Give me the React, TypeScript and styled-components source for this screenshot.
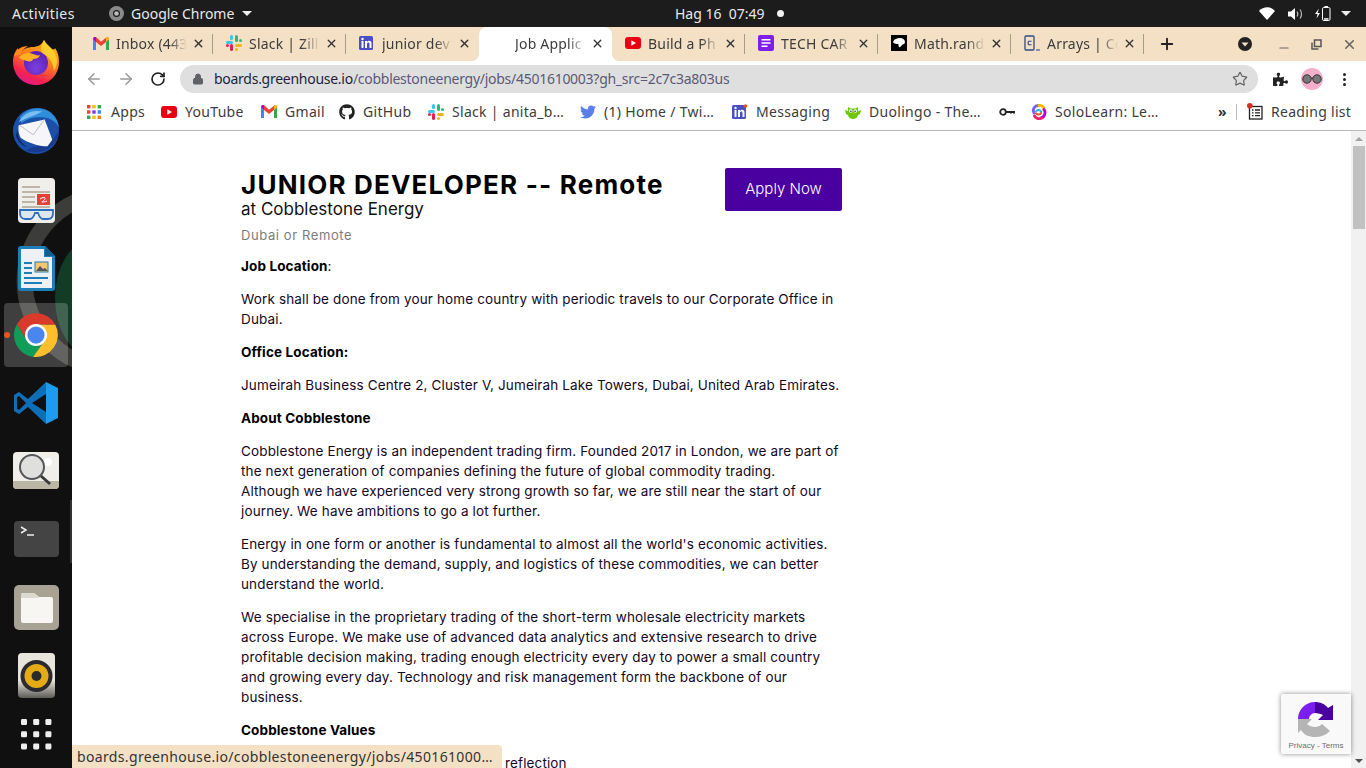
import React from 'react'
import styled, { createGlobalStyle } from 'styled-components'
import { FaGithub, FaPuzzlePiece, FaTwitter } from 'react-icons/fa'
import { ArrowLeft, ArrowRight, Lock, Minus, Plus, RotateCw, Star, X } from 'lucide-react'

const UI_FONT = '"Noto Sans", "Open Sans", sans-serif'
const PAGE_FONT = 'Inter, "Liberation Sans", sans-serif'

const GlobalStyle = createGlobalStyle`
  html, body { margin: 0; padding: 0; height: 100%; overflow: hidden; background: #101010; }
  #root { height: 100%; }
  * { box-sizing: border-box; }
`

/* ---------- logos and favicons ---------- */

function GmailIcon() {
  return (
    <svg width="16" height="13" viewBox="0 0 16 13">
      <path d="M0 2v11h3V5z" fill="#4285f4" />
      <path d="M16 2v11h-3V5z" fill="#34a853" />
      <path d="M0 2l3 3 5 4 5-4 3-3-1-2h-1L8 4.800 3 0H1z" fill="#ea4335" />
      <path d="M13 5l3-3-1-2h-1l-1 1z" fill="#fbbc04" />
      <path d="M3 5L0 2l1-2h1l1 1z" fill="#a100d8" />
    </svg>
  )
}

function SlackIcon() {
  return (
    <svg width="16" height="16" viewBox="0 0 16 16">
      <rect x="0" y="6" width="7" height="3" rx="1.500" fill="#36c5f0" />
      <rect x="4" y="0" width="3" height="5" rx="1.500" fill="#36c5f0" />
      <rect x="9" y="0" width="3" height="7" rx="1.500" fill="#2eb67d" />
      <rect x="13" y="4" width="3" height="3" rx="1.500" fill="#2eb67d" />
      <rect x="9" y="9" width="7" height="3" rx="1.500" fill="#ecb22e" />
      <rect x="9" y="13" width="3" height="3" rx="1.500" fill="#ecb22e" />
      <rect x="4" y="9" width="3" height="7" rx="1.500" fill="#e01e5a" />
      <rect x="0" y="9" width="3" height="3" rx="1.500" fill="#e01e5a" />
    </svg>
  )
}

function LinkedInIcon({ dot }: { dot?: boolean }) {
  return (
    <svg width="16" height="16" viewBox="0 0 16 16">
      <rect x="0" y="1" width="14" height="14" rx="1.500" fill="#4b4fc4" />
      <rect x="2.500" y="6" width="2" height="7" fill="#fff" />
      <circle cx="3.500" cy="4" r="1.200" fill="#fff" />
      <path d="M6 6h2v1c.5-.8 1.300-1.200 2.200-1.200 1.600 0 2.300 1 2.300 2.800V13h-2V9c0-1-.3-1.500-1.100-1.500S8 8 8 9v4H6z" fill="#fff" />
      {dot && <circle cx="13.500" cy="2" r="1.800" fill="#e8502a" />}
    </svg>
  )
}

function YouTubeIcon() {
  return (
    <svg width="16" height="12" viewBox="0 0 16 12">
      <rect width="16" height="12" rx="3" fill="#e60012" />
      <path d="M6.300 3.300v5.400L11 6z" fill="#fff" />
    </svg>
  )
}

function DocsIcon() {
  return (
    <svg width="16" height="16" viewBox="0 0 16 16">
      <rect width="16" height="16" rx="2" fill="#7c1fe8" />
      <path d="M3.500 4h9v1.400h-9zM3.500 7.300h9v1.400h-9zM3.500 10.600h6v1.400h-6z" fill="#fff" />
    </svg>
  )
}

function MathIcon() {
  return (
    <svg width="16" height="16" viewBox="0 0 16 16">
      <rect width="16" height="16" fill="#000" />
      <path d="M2 7c1-3 4-4 7-4s5 2 5 4-2 2-3 3-2 3-3 2 0-3-1-3-4 0-5-2z" fill="#fff" />
    </svg>
  )
}

function ArraysIcon() {
  return (
    <svg width="16" height="16" viewBox="0 0 16 16" fill="none">
      <rect x="1" y="1" width="9" height="14" rx="1" stroke="#2e4a86" strokeWidth="1.300" />
      <path d="M7.500 6.200H5a.8.8 0 0 0-.8.8v2a.8.8 0 0 0 .8.8h2.500" stroke="#2e4a86" strokeWidth="1.100" />
      <path d="M12 15h4" stroke="#4a6aa8" strokeWidth="1.300" />
    </svg>
  )
}

function AppsIcon() {
  const colors = ['#ea4335', '#fbbc04', '#34a853', '#ea4335', '#7c3aed', '#4285f4', '#34a853', '#fbbc04', '#ea8600']
  return (
    <svg width="16" height="14" viewBox="0 0 16 14">
      {colors.map((c, i) => (
        <rect key={i} x={(i % 3) * 5.300} y={Math.floor(i / 3) * 5.300} width="3.400" height="3.400" fill={c} />
      ))}
    </svg>
  )
}

function DuolingoIcon() {
  return (
    <svg width="16" height="16" viewBox="0 0 16 16">
      <path d="M0 6l3 1V3l2.500 1.500h5L13 3v4l3-1-1 4-2 1c-.5 2.500-2.500 4-5 4s-4.500-1.500-5-4l-2-1z" fill="#6cc70a" />
      <circle cx="5.700" cy="7" r="1.800" fill="#fff" />
      <circle cx="10.300" cy="7" r="1.800" fill="#fff" />
      <circle cx="5.900" cy="7.200" r=".8" fill="#224" />
      <circle cx="10.100" cy="7.200" r=".8" fill="#224" />
      <path d="M7 9h2l-1 1.500z" fill="#f5a300" />
    </svg>
  )
}

function KeyIcon() {
  return (
    <svg width="16" height="8" viewBox="0 0 16 8" fill="none">
      <circle cx="4" cy="4" r="2.800" stroke="#222" strokeWidth="1.800" />
      <path d="M7 3h9v2.500h-2V5h-1v.5h-2V5H7z" fill="#222" />
    </svg>
  )
}

function SoloLearnIcon() {
  return (
    <svg width="16" height="16" viewBox="0 0 16 16" fill="none" strokeWidth="2.800" strokeLinecap="round">
      <path d="M3 9C1 5 4 1 8 1.500" stroke="#7a5cf0" />
      <path d="M8 1.500c3.500-.5 5.500 2 5 4.500" stroke="#f5b800" />
      <path d="M13 5.500c2.500 3.500 0 8-3 8.500" stroke="#b400e6" />
      <path d="M10.500 14c-3 1.500-6 0-7-2" stroke="#f0226e" />
      <path d="M5 7.500c1.500-2 4-2 5 0" stroke="#2bb3e8" strokeWidth="2" />
      <path d="M10 9c-1 2-3.500 2-5 .5" stroke="#f0522a" strokeWidth="2" />
    </svg>
  )
}

function ReadingListIcon() {
  return (
    <svg width="16" height="17" viewBox="0 0 16 17" fill="none">
      <rect x="2.500" y="3.500" width="12.500" height="12.500" stroke="#222" strokeWidth="1.300" />
      <path d="M5 7h1.500M8 7h5M5 9.800h1.500M8 9.800h5M5 12.600h1.500M8 12.600h5" stroke="#222" strokeWidth="1.300" />
      <circle cx="2.800" cy="2.800" r="2.800" fill="#d93025" />
    </svg>
  )
}

function Firefox() {
  return (
    <svg width="46" height="46" viewBox="0 1 46 46">
      <defs>
        <linearGradient id="fxBody" x1="0.800" y1="0" x2="0.300" y2="1">
          <stop offset="0" stopColor="#ffc21a" />
          <stop offset="0.450" stopColor="#ff7a1f" />
          <stop offset="0.800" stopColor="#f5224f" />
          <stop offset="1" stopColor="#dd1a8c" />
        </linearGradient>
        <radialGradient id="fxGlobe" cx="0.500" cy="0.700" r="0.700">
          <stop offset="0" stopColor="#7b3fe0" />
          <stop offset="1" stopColor="#5a1fb0" />
        </radialGradient>
      </defs>
      <path d="M31 1c2 4 5 6 8 9 2 1 3 0 3-1 3 4 4 9 4 14 0 13-10 23-23 23S0 36 0 23C0 17 2 12 5 9c0 3 1 4 2 5 3-4 8-6 13-6 4 0 9-2 11-7z" fill="url(#fxBody)" />
      <circle cx="23" cy="24" r="12" fill="url(#fxGlobe)" />
      <path d="M6 18c4-4 10-5 14-3 3 1 5 2 7 1-1 3-4 4-7 4 0 3-5 3-9 1-2 0-4-1-5-3z" fill="#ffb11f" />
      <path d="M31 1c3 6 12 10 13 20 0 4-1 8-3 11-1-9-5-15-12-18-2-5 0-9 2-13z" fill="#ffd030" opacity=".9" />
      <path d="M1 17c2-6 7-10 14-10-5 3-7 6-8 9-2 0-4 0-6 1z" fill="#ff8a1f" />
    </svg>
  )
}

function Thunderbird() {
  return (
    <svg width="48" height="48" viewBox="0 1 50 50">
      <circle cx="25" cy="26" r="24" fill="#1b4fa8" />
      <path d="M8 12C14 3 26 0 36 4c7 3 12 10 13 18-4-6-9-9-15-10-9-1-17 0-24 6z" fill="#2f8ddb" />
      <path d="M14 46c9 4 20 3 27-4 5-5 8-11 8-17-4 8-10 14-18 16-6 1-12 2-17 5z" fill="#183b8c" />
      <path d="M7 20l27-6 8 21-5 7c-10 0-21-4-28-9-2-4-3-9-2-13z" fill="#f6f6f8" />
      <path d="M8 20l14 10 12-16" fill="none" stroke="#b8bcc8" strokeWidth="1" />
      <path d="M7 17C11 8 22 3 32 6c-4 1-6 3-10 4-6 2-11 4-15 7z" fill="#7cc0f0" />
      <path d="M7 21c-3 8 1 17 9 22-5-1-10-6-12-12z" fill="#0c2a6e" />
    </svg>
  )
}

function DocViewer() {
  return (
    <svg width="37" height="47" viewBox="0 -2 37 47">
      <rect width="37" height="45" rx="4" fill="#efeeea" />
      <path d="M4 8h18v2H4zM4 13h28v2H4zM4 18h13v2H4zM4 23h13v2H4zM4 28h28v2H4z" fill="#bdb6a6" />
      <rect x="19" y="16" width="13" height="11" fill="#e5403a" />
      <path d="M22 21c3-2 6-2 5 0s-4 3-3 3 3 0 5-1" fill="none" stroke="#fff" strokeWidth="1" />
      <path d="M2 32h33v3c0 4-2 6-5 6h-5c-3 0-4-3-5-6h-3c-1 3-2 6-5 6H7c-3 0-5-2-5-6z" fill="#dfe7ef" stroke="#2f6fc0" strokeWidth="1.800" />
    </svg>
  )
}

function WriterIcon() {
  return (
    <svg width="37" height="47" viewBox="0 -2 37 47">
      <path d="M3 0h24l10 10v32a3 3 0 0 1-3 3H3a3 3 0 0 1-3-3V3a3 3 0 0 1 3-3z" fill="#1d7fb8" />
      <path d="M3 3h23v8h8v31H3z" fill="#eef1f4" />
      <path d="M27 0l10 10H27z" fill="#145f8f" />
      <path d="M6 16h8v2H6zM6 21h8v2H6zM6 26h8v2H6zM6 31h24v2H6zM6 36h18v2H6z" fill="#1d7fb8" />
      <rect x="17" y="16" width="13" height="10" fill="#f3c76f" stroke="#1d7fb8" />
      <path d="M18 25l4-5 3 3 2-1 3 3z" fill="#555" />
    </svg>
  )
}

function ChromeLogo() {
  return (
    <svg width="46" height="46" viewBox="0 0 48 48">
      <path d="M24 24L14.500 29.500 4.100 12.500A23 23 0 0 0 21 46.800L33.500 29.500Z" fill="#0f9d58" />
      <path d="M24 24V13H44A23 23 0 0 1 21 46.800L33.500 29.500Z" fill="#fdc02c" />
      <path d="M24 24L14.500 29.500 4.100 12.500A23 23 0 0 1 44 13H24Z" fill="#d93a2b" />
      <circle cx="24" cy="24" r="11.500" fill="#fff" />
      <circle cx="24" cy="24" r="9" fill="#4a86f0" />
    </svg>
  )
}

function VSCode() {
  return (
    <svg width="44" height="42" viewBox="0 0 44 42">
      <path d="M32 0L14 17 5 10 0 13v16l5 3 9-7 18 17V30L18 21l14-9z" fill="#0e6fb8" />
      <path d="M5 14l7 7-7 7-2-1.500V15.500z" fill="#101010" />
      <path d="M32 0l12 6v30l-12 6z" fill="#1c9bef" />
    </svg>
  )
}

function Magnifier() {
  return (
    <svg width="46" height="38" viewBox="0 0 46 38">
      <rect width="46" height="37" rx="4" fill="#efeee8" />
      <path d="M0 29h46v4a4 4 0 0 1-4 4H4a4 4 0 0 1-4-4z" fill="#bcb6a4" />
      <circle cx="35" cy="10" r="4" fill="#fff" />
      <circle cx="19" cy="15" r="12" fill="#dfe0de" stroke="#55565a" strokeWidth="2" />
      <path d="M28 24l9 8" stroke="#3a3a3c" strokeWidth="3" />
    </svg>
  )
}

function Terminal() {
  return (
    <svg width="45" height="36" viewBox="0 0 45 36">
      <rect width="45" height="36" rx="4" fill="#444" />
      <path d="M7 6l5 3-5 3" fill="none" stroke="#eee" strokeWidth="1.500" />
      <path d="M13 14h7" stroke="#eee" strokeWidth="1.500" />
    </svg>
  )
}

function FilesIcon() {
  return (
    <svg width="45" height="45" viewBox="0 0 45 45">
      <rect width="45" height="45" rx="5" fill="#a8a294" />
      <path d="M7 10a2 2 0 0 1 2-2h11l5 4h12a2 2 0 0 1 2 2v22a2 2 0 0 1-2 2H9a2 2 0 0 1-2-2z" fill="#f7f6f3" />
      <path d="M7 13h18l-5-5H9a2 2 0 0 0-2 2z" fill="#dcd9d1" />
    </svg>
  )
}

function Rhythmbox() {
  return (
    <svg width="37" height="45" viewBox="0 0 37 45">
      <defs>
        <linearGradient id="rbBox" x1="0" y1="0" x2="0" y2="1">
          <stop offset="0.600" stopColor="#e8e5dc" />
          <stop offset="1" stopColor="#5d5d58" />
        </linearGradient>
      </defs>
      <rect width="37" height="45" rx="4" fill="url(#rbBox)" />
      <circle cx="18.500" cy="23" r="16" fill="#2b2b2e" />
      <circle cx="18.500" cy="23" r="12" fill="#e3ac17" />
      <circle cx="18.500" cy="23" r="5" fill="#2a2a2a" />
    </svg>
  )
}

function DockGrid() {
  return (
    <svg width="32" height="32" viewBox="0 0 32 32">
      {[0, 1, 2, 3, 4, 5, 6, 7, 8].map((i) => (
        <rect key={i} x={(i % 3) * 12.200 + 1} y={Math.floor(i / 3) * 12.200 + 1} width="6" height="6" rx="1.300" fill="#eee" />
      ))}
    </svg>
  )
}

function Wallpaper() {
  return (
    <WallpaperArt viewBox="0 0 72 741" width="72" height="741">
      <ellipse cx="92" cy="271" rx="37" ry="58" fill="#123c26" />
      <circle cx="111.600" cy="254" r="87" fill="none" stroke="#3c3c3a" strokeWidth="16" />
      <path d="M71 473v63" stroke="#333" strokeWidth="2" />
    </WallpaperArt>
  )
}

function RecaptchaLogo() {
  return (
    <svg width="38" height="38" viewBox="0 0 38 38">
      <path d="M1 19C1 10 8 2 18 2v11c-3 0-6 3-6 6z" fill="#7a1ff0" />
      <path d="M18 2c5 0 10 2 13 6l5-3v15H21l5-5c-2-1-5-2-8-2z" fill="#4a00a0" />
      <path d="M1 19h14l-5 5c2 2 5 3 8 3 3 0 5-1 7-3l8 7c-4 4-9 6-15 6-6 0-11-2-14-7l-3 3z" fill="#b5b5b5" />
    </svg>
  )
}

/* ---------- data ---------- */

const tabs = [
  { title: 'Inbox (443', icon: <GmailIcon /> },
  { title: 'Slack | Zilla', icon: <SlackIcon /> },
  { title: 'junior dev', icon: <LinkedInIcon /> },
  { title: 'Job Applic', active: true },
  { title: 'Build a Ph', icon: <YouTubeIcon /> },
  { title: 'TECH CAR', icon: <DocsIcon /> },
  { title: 'Math.rand', icon: <MathIcon /> },
  { title: 'Arrays | Co', icon: <ArraysIcon /> }
]

const bookmarks = [
  { label: 'Apps', icon: <AppsIcon />, width: 74 },
  { label: 'YouTube', icon: <YouTubeIcon />, width: 100 },
  { label: 'Gmail', icon: <GmailIcon />, width: 78 },
  { label: 'GitHub', icon: <FaGithub size={16} color="#222" />, width: 89 },
  { label: 'Slack | anita_b…', icon: <SlackIcon />, width: 152 },
  { label: '(1) Home / Twi…', icon: <FaTwitter size={16} color="#5b7fe8" />, width: 152 },
  { label: 'Messaging', icon: <LinkedInIcon dot />, width: 113 },
  { label: 'Duolingo - The…', icon: <DuolingoIcon />, width: 154 },
  { label: '', icon: <KeyIcon />, width: 32 },
  { label: 'SoloLearn: Le…', icon: <SoloLearnIcon />, width: 187 }
]

const dockItems = [
  { name: 'firefox', icon: <Firefox /> },
  { name: 'thunderbird', icon: <Thunderbird /> },
  { name: 'viewer', icon: <DocViewer /> },
  { name: 'writer', icon: <WriterIcon /> },
  { name: 'chrome', icon: <ChromeLogo />, active: true },
  { name: 'vscode', icon: <VSCode /> },
  { name: 'magnifier', icon: <Magnifier /> },
  { name: 'terminal', icon: <Terminal /> },
  { name: 'files', icon: <FilesIcon /> },
  { name: 'rhythmbox', icon: <Rhythmbox /> }
]

export default function App() {
  return (
    <Desktop>
      <GlobalStyle />
      <TopBar>
        <Activities>Activities</Activities>
        <AppMenu>
          <svg width="15" height="15" viewBox="0 0 15 15">
            <circle cx="7.500" cy="7.500" r="7.500" fill="#8a8a8a" />
            <circle cx="7.500" cy="7.500" r="3.500" fill="#1c1c1c" />
            <circle cx="7.500" cy="7.500" r="2.300" fill="#bdbdbd" />
          </svg>
          <AppName>Google Chrome</AppName>
          <Caret />
        </AppMenu>
        <Clock>Hag 16&nbsp;&nbsp;07:49</Clock>
        <ClockDot />
        <Tray>
          <svg width="19" height="13" viewBox="0 0 19 13">
            <path d="M0 4c4.500-5 12-5 16 0l-8 9z" fill="#fff" />
          </svg>
          <svg width="17" height="12" viewBox="0 0 17 12" fill="none">
            <path d="M0 3.500h3L7 0v12L3 8.500H0z" fill="#fff" />
            <path d="M9 3.500c1 1.500 1 3.500 0 5M12 1.500c2 2.500 2 6.500 0 9" stroke="#bbb" strokeWidth="1.200" />
          </svg>
          <svg width="16" height="15" viewBox="0 0 16 15" fill="none">
            <path d="M4 2.500L0 8h2.500l-1 4.500L5 7H2.500z" fill="#fff" />
            <rect x="7.500" y="1.500" width="7.500" height="13" rx="1.300" stroke="#fff" strokeWidth="1" />
            <rect x="9.500" y="0" width="3.500" height="1.500" fill="#fff" />
            <rect x="9" y="12.200" width="4.500" height="1.500" fill="#fff" />
          </svg>
          <Caret />
        </Tray>
      </TopBar>

      <Body>
        <Dock>
          <Wallpaper />
          {dockItems.map(({ name, icon, active }) => (
            <DockItem key={name} $active={active}>
              {active && <RunningDot />}
              {icon}
            </DockItem>
          ))}
          <DockGridSlot>
            <DockGrid />
          </DockGridSlot>
        </Dock>

        <Browser>
          <TabStrip>
            {tabs.map(({ title, icon, active }, i) => (
              <Tab key={title} $active={active} $divider={!active && i !== 2}>
                <Favicon>{icon}</Favicon>
                <TabTitle>{title}</TabTitle>
                <TabClose>
                  <X size={13} strokeWidth={2.500} />
                </TabClose>
              </Tab>
            ))}
            <NewTab>
              <Plus size={18} strokeWidth={2.500} />
            </NewTab>
            <WindowControls>
              <TabSearch>
                <svg width="14" height="14" viewBox="0 0 14 14">
                  <circle cx="7" cy="7" r="7" fill="#222" />
                  <path d="M3.500 5.500h7L7 9.500z" fill="#f4e1c5" />
                </svg>
              </TabSearch>
              <WindowButton>
                <MinimizeGlyph>
                  <Minus size={14} color="#666" strokeWidth={2} />
                </MinimizeGlyph>
              </WindowButton>
              <WindowButton>
                <svg width="11" height="11" viewBox="0 0 11 11" fill="none" stroke="#555" strokeWidth="1.500">
                  <rect x="3.500" y="1" width="6.500" height="6.500" />
                  <path d="M1 3.500v6.500h6.500" />
                </svg>
              </WindowButton>
              <WindowButton>
                <X size={15} color="#666" strokeWidth={2.500} />
              </WindowButton>
            </WindowControls>
          </TabStrip>

          <Toolbar>
            <NavButton $muted>
              <ArrowLeft size={18} strokeWidth={2} />
            </NavButton>
            <NavButton $muted>
              <ArrowRight size={18} strokeWidth={2} />
            </NavButton>
            <NavButton>
              <RotateCw size={16} strokeWidth={2.500} />
            </NavButton>
            <Omnibox>
              <Lock size={12} fill="#5f6368" color="#5f6368" strokeWidth={2} />
              <Url>
                <UrlHost>boards.greenhouse.io</UrlHost>/cobblestoneenergy/jobs/4501610003?gh_src=2c7c3a803us
              </Url>
              <Star size={16} color="#666" strokeWidth={1.800} />
            </Omnibox>
            <ToolbarIcons>
              <FaPuzzlePiece size={15} color="#222" />
              <Avatar>
                <svg width="20" height="10" viewBox="0 0 20 10">
                  <circle cx="5" cy="5" r="4.200" fill="#777" stroke="#333" />
                  <circle cx="15" cy="5" r="4.200" fill="#777" stroke="#333" />
                  <path d="M9 4h2" stroke="#333" />
                </svg>
              </Avatar>
              <Kebab>
                <i />
                <i />
                <i />
              </Kebab>
            </ToolbarIcons>
          </Toolbar>

          <BookmarkBar>
            {bookmarks.map(({ label, icon, width }) => (
              <Bookmark key={label || 'key'} $width={width}>
                <BookmarkIcon>{icon}</BookmarkIcon>
                {label && <span>{label}</span>}
              </Bookmark>
            ))}
            <Chevrons>»</Chevrons>
            <BarDivider />
            <Bookmark $width={119}>
              <BookmarkIcon>
                <ReadingListIcon />
              </BookmarkIcon>
              <span>Reading list</span>
            </Bookmark>
          </BookmarkBar>

          <Viewport>
            <Page>
              <JobHeader>
                <JobHeading>
                  <JobTitle>JUNIOR DEVELOPER -- Remote</JobTitle>
                  <Company>at Cobblestone Energy</Company>
                  <JobLocation>Dubai or Remote</JobLocation>
                </JobHeading>
                <ApplyButton>Apply Now</ApplyButton>
              </JobHeader>

              <Para>
                <strong>Job Location</strong>:
              </Para>
              <Para>
                Work shall be done from your home country with periodic travels to our Corporate Office in
                <br />
                Dubai.
              </Para>
              <Para>
                <strong>Office Location:</strong>
              </Para>
              <Para>Jumeirah Business Centre 2, Cluster V, Jumeirah Lake Towers, Dubai, United Arab Emirates.</Para>
              <Para>
                <strong>About Cobblestone</strong>
              </Para>
              <Para>
                Cobblestone Energy is an independent trading firm. Founded 2017 in London, we are part of
                <br />
                the next generation of companies defining the future of global commodity trading.
                <br />
                Although we have experienced very strong growth so far, we are still near the start of our
                <br />
                journey. We have ambitions to go a lot further.
              </Para>
              <Para>
                Energy in one form or another is fundamental to almost all the world's economic activities.
                <br />
                By understanding the demand, supply, and logistics of these commodities, we can better
                <br />
                understand the world.
              </Para>
              <Para>
                We specialise in the proprietary trading of the short-term wholesale electricity markets
                <br />
                across Europe. We make use of advanced data analytics and extensive research to drive
                <br />
                profitable decision making, trading enough electricity every day to power a small country
                <br />
                and growing every day. Technology and risk management form the backbone of our
                <br />
                business.
              </Para>
              <Para>
                <strong>Cobblestone Values</strong>
              </Para>
              <Para>
                <ReflectionLine>reflection</ReflectionLine>
              </Para>
            </Page>
            <Scrollbar>
              <ScrollArrow $up />
              <ScrollTrack>
                <ScrollThumb />
              </ScrollTrack>
              <ScrollArrow />
            </Scrollbar>
            <Recaptcha>
              <RecaptchaLogo />
              <RecaptchaLinks>Privacy - Terms</RecaptchaLinks>
            </Recaptcha>
            <StatusBubble>boards.greenhouse.io/cobblestoneenergy/jobs/450161000…</StatusBubble>
          </Viewport>
        </Browser>
      </Body>
    </Desktop>
  )
}

/* ---------- shell ---------- */

const Desktop = styled.div`
  width: 1366px;
  height: 768px;
  display: flex;
  flex-direction: column;
  overflow: hidden;
  font-family: ${UI_FONT};
`

const TopBar = styled.header`
  height: 27px;
  flex: none;
  display: flex;
  align-items: center;
  background: #1c1c1c;
  color: #e8e8e8;
  font-size: 14px;
  padding-left: 12px;
`

const Activities = styled.span`
  width: 97px;
  letter-spacing: 0.45px;
`

const AppMenu = styled.div`
  display: flex;
  align-items: center;
  width: 566px;
`

const AppName = styled.span`
  margin: 0 8px 0 7px;
`

const Caret = styled.span`
  width: 0;
  height: 0;
  border-left: 5px solid transparent;
  border-right: 5px solid transparent;
  border-top: 5px solid #eee;
`

const Clock = styled.span`
  width: 102px;
  white-space: nowrap;
`

const ClockDot = styled.span`
  width: 7px;
  height: 7px;
  border-radius: 50%;
  background: #f2f2f2;
`

const Tray = styled.div`
  margin-left: auto;
  display: flex;
  align-items: center;
  gap: 10px;
  padding-right: 15px;
`

const Body = styled.div`
  flex: 1;
  min-height: 0;
  display: flex;
`

const Dock = styled.nav`
  position: relative;
  width: 72px;
  flex: none;
  padding-top: 2px;
  background: #101010;
  display: flex;
  flex-direction: column;
  overflow: hidden;
`

const WallpaperArt = styled.svg`
  position: absolute;
  top: 0;
  left: 0;
`

const DockItem = styled.div<{ $active?: boolean }>`
  position: relative;
  height: ${({ $active }) => ($active ? '64px' : '68px')};
  margin: ${({ $active }) => ($active ? '2px 4px' : '0')};
  flex: none;
  display: flex;
  align-items: center;
  justify-content: center;
  border-radius: 4px;
  background: ${({ $active }) => ($active ? 'rgba(255, 255, 255, 0.2)' : 'transparent')};
`

const RunningDot = styled.span`
  position: absolute;
  left: 0;
  top: 29px;
  width: 6px;
  height: 6px;
  border-radius: 50%;
  background: #e95420;
`

const DockGridSlot = styled.div`
  position: relative;
  display: flex;
  justify-content: center;
  padding-top: 9px;
`

const Browser = styled.main`
  flex: 1;
  min-width: 0;
  display: flex;
  flex-direction: column;
  background: #fff;
`

/* ---------- tabs ---------- */

const TabStrip = styled.div`
  height: 34px;
  flex: none;
  display: flex;
  padding-left: 8px;
  background: #f4e1c5;
`

const Tab = styled.div<{ $active?: boolean; $divider?: boolean }>`
  position: relative;
  width: 133px;
  flex: none;
  display: flex;
  align-items: center;
  padding: 0 7px 2px 13px;
  font-size: 14px;
  letter-spacing: 0.2px;
  color: #3c3c3c;
  background: ${({ $active }) => ($active ? '#fff' : 'transparent')};
  border-radius: ${({ $active }) => ($active ? '8px 8px 0 0' : '0')};

  ${({ $divider }) =>
    $divider &&
    `
    &::after {
      content: '';
      position: absolute;
      right: 0;
      top: 7px;
      height: 20px;
      width: 1px;
      background: #a89a86;
    }
  `}

  ${({ $active }) =>
    $active &&
    `
    &::before {
      content: '';
      position: absolute;
      left: -8px;
      bottom: 0;
      width: 8px;
      height: 8px;
      background: radial-gradient(circle at 0 0, transparent 8px, #fff 8.5px);
    }
    &::after {
      content: '';
      position: absolute;
      right: -8px;
      bottom: 0;
      width: 8px;
      height: 8px;
      background: radial-gradient(circle at 100% 0, transparent 8px, #fff 8.5px);
    }
  `}
`

const Favicon = styled.span`
  width: 16px;
  height: 16px;
  flex: none;
  display: flex;
  align-items: center;
  justify-content: center;
`

const TabTitle = styled.span`
  flex: 1;
  min-width: 0;
  margin-left: 7px;
  white-space: nowrap;
  overflow: hidden;
  mask-image: linear-gradient(to right, #000 72%, transparent 96%);
`

const TabClose = styled.span`
  width: 16px;
  height: 16px;
  flex: none;
  display: flex;
  align-items: center;
  justify-content: center;
  color: #333;
`

const NewTab = styled.span`
  width: 46px;
  flex: none;
  display: flex;
  align-items: center;
  justify-content: center;
  color: #222;
`

const WindowControls = styled.div`
  margin-left: auto;
  display: flex;
  align-items: center;
`

const TabSearch = styled.span`
  width: 32px;
  margin-right: 6px;
  margin-left: -6px;
  display: flex;
  justify-content: center;
`

const WindowButton = styled.span`
  width: 33px;
  display: flex;
  align-items: center;
  justify-content: center;
`

const MinimizeGlyph = styled.span`
  display: flex;
  padding-top: 8px;
`

/* ---------- toolbar ---------- */

const Toolbar = styled.div`
  height: 32px;
  flex: none;
  display: flex;
  align-items: center;
  padding-top: 4px;
  padding-left: 6px;
  background: #fff;
`

const NavButton = styled.span<{ $muted?: boolean }>`
  width: 32px;
  flex: none;
  display: flex;
  justify-content: center;
  color: ${({ $muted }) => ($muted ? '#9a9a9a' : '#222')};
`

const Omnibox = styled.div`
  flex: none;
  width: 1078px;
  height: 28px;
  margin-left: 6px;
  display: flex;
  align-items: center;
  padding: 0 10px 0 12px;
  border-radius: 14px;
  background: #dfdfdf;
`

const Url = styled.span`
  flex: 1;
  margin-left: 10px;
  padding-bottom: 2px;
  font-size: 14px;
  letter-spacing: -0.27px;
  color: #5a5a78;
  white-space: nowrap;
`

const UrlHost = styled.span`
  color: #1e1e3c;
`

const ToolbarIcons = styled.div`
  display: flex;
  align-items: center;
  gap: 13px;
  margin-left: 15px;
`

const Avatar = styled.span`
  width: 22px;
  height: 22px;
  border-radius: 50%;
  background: #f5aecb;
  display: flex;
  align-items: center;
  justify-content: center;
`

const Kebab = styled.span`
  margin-left: 7px;
  display: flex;
  flex-direction: column;
  gap: 2px;

  i {
    width: 3px;
    height: 3px;
    border-radius: 50%;
    background: #222;
  }
`

const BookmarkBar = styled.div`
  height: 38px;
  flex: none;
  display: flex;
  align-items: center;
  padding-left: 15px;
  border-bottom: 1px solid #b8b8b8;
  font-size: 14px;
  letter-spacing: 0.3px;
  color: #3c3c3c;
  background: #fff;
`

const Bookmark = styled.div<{ $width: number }>`
  width: ${({ $width }) => $width}px;
  flex: none;
  display: flex;
  align-items: center;
  gap: 8px;
  white-space: nowrap;
`

const BookmarkIcon = styled.span`
  width: 16px;
  height: 17px;
  flex: none;
  display: flex;
  align-items: center;
  justify-content: center;
`

const Chevrons = styled.span`
  width: 21px;
  font-weight: 700;
  color: #333;
`

const BarDivider = styled.span`
  width: 1px;
  height: 16px;
  margin-right: 10px;
  background: #bbb;
`

/* ---------- page ---------- */

const Viewport = styled.div`
  position: relative;
  flex: 1;
  min-height: 0;
  display: flex;
  overflow: hidden;
  background: #fff;
`

const Page = styled.article`
  flex: 1;
  min-width: 0;
  padding: 37px 0 0 169px;
  font-family: ${PAGE_FONT};
  font-size: 13.500px;
  letter-spacing: 0.135px;
  line-height: 20px;
  color: #14081e;
  overflow: hidden;
  white-space: nowrap;
`

const JobHeader = styled.div`
  width: 601px;
  display: flex;
  justify-content: space-between;
  align-items: flex-start;
  margin-bottom: 11px;
`

const JobHeading = styled.div`
  padding-top: 1px;
`

const JobTitle = styled.h1`
  margin: 0 0 -1px;
  padding-top: 1px;
  font-size: 26px;
  letter-spacing: 1.2px;
  line-height: 30px;
  font-weight: 700;
  color: #000;
`

const Company = styled.div`
  font-size: 17px;
  letter-spacing: 0;
  line-height: 20px;
  color: #111;
`

const JobLocation = styled.div`
  margin-top: 6px;
  font-size: 13px;
  letter-spacing: 0.6px;
  line-height: 20px;
  color: #7c7c7c;
`

const ApplyButton = styled.button`
  width: 117px;
  height: 43px;
  padding: 0 0 2px;
  border: 0;
  border-radius: 2px;
  background: #4a00a0;
  color: #fff;
  font-family: ${PAGE_FONT};
  font-size: 15px;
  font-weight: 300;
`

const Para = styled.p`
  margin: 0 0 13px;

  strong {
    color: #000;
    font-weight: 700;
  }
`

const ReflectionLine = styled.span`
  margin-left: 264px;
`

const Scrollbar = styled.div`
  width: 15px;
  flex: none;
  display: flex;
  flex-direction: column;
  background: #f1f1f1;
`

const ScrollArrow = styled.span<{ $up?: boolean }>`
  height: 15px;
  flex: none;
  display: flex;
  align-items: center;
  justify-content: center;

  &::before {
    content: '';
    border-left: 4px solid transparent;
    border-right: 4px solid transparent;
    ${({ $up }) => ($up ? 'border-bottom: 4px solid #a3a3a3;' : 'border-top: 4px solid #505050;')}
  }
`

const ScrollTrack = styled.div`
  flex: 1;
`

const ScrollThumb = styled.div`
  height: 83px;
  margin: 0 1px 0 2px;
  background: #c1c1c1;
`

const Recaptcha = styled.div`
  position: absolute;
  left: 1209px;
  top: 563px;
  width: 70px;
  height: 60px;
  padding-top: 6px;
  display: flex;
  flex-direction: column;
  align-items: center;
  background: #f9f9f9;
  box-shadow: 0 0 5px rgba(0, 0, 0, 0.45);
  border-radius: 2px 0 0 2px;
`

const RecaptchaLinks = styled.span`
  margin-top: 3px;
  font-family: "Liberation Sans", sans-serif;
  font-size: 8px;
  line-height: 10px;
  color: #6f6f6f;
`

const StatusBubble = styled.div`
  position: absolute;
  left: 0;
  bottom: 0;
  width: 430px;
  height: 23px;
  padding-left: 5px;
  display: flex;
  align-items: center;
  border-radius: 0 4px 0 0;
  background: #f4e1c5;
  color: #333;
  font-size: 14px;
  letter-spacing: 0.35px;
  white-space: nowrap;
`
